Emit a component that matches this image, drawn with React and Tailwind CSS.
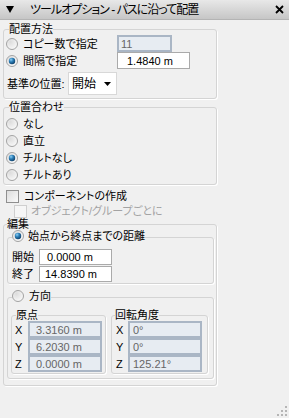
import React from "react";

function Radio({ checked }) {
  return (
    <svg width="12" height="12" viewBox="0 0 12 12" className="shrink-0 block">
      <defs>
        <radialGradient id="rgOuter" cx="0.35" cy="0.3" r="0.8">
          <stop offset="0" stopColor="#dcdcdc" />
          <stop offset="1" stopColor="#fbfbfb" />
        </radialGradient>
        <radialGradient id="rgDot" cx="0.35" cy="0.3" r="0.75">
          <stop offset="0" stopColor="#8fd0f5" />
          <stop offset="0.45" stopColor="#2c7fb8" />
          <stop offset="1" stopColor="#0f3f68" />
        </radialGradient>
      </defs>
      <circle cx="6" cy="6" r="5.5" fill="url(#rgOuter)" stroke="#a2a2a2" />
      {checked && <circle cx="6" cy="6" r="3.2" fill="url(#rgDot)" />}
    </svg>
  );
}

function Check({ disabled }) {
  return (
    <span
      className={
        disabled
          ? "block w-[13px] h-[13px] shrink-0 border border-[#cfcfcf] bg-[#f6f6f6]"
          : "block w-[13px] h-[13px] shrink-0 border border-[#8f8f8f] bg-gradient-to-br from-[#dcdcdc] to-[#fafafa]"
      }
    />
  );
}

function DisInput({ value, w, pl }) {
  return (
    <div
      className={`${w} h-[17px] shrink-0 border-2 border-[#aab6c5] bg-[#e7ecf2] text-[#666666] flex items-center ${pl}`}
    >
      {value}
    </div>
  );
}

const fs = "border border-[#d4d4d4] rounded-[3px] shadow-[1px_1px_0_#ffffff]";

export default function App() {
  return (
    <div className="w-[289px] h-[418px] bg-[#f0f0f0] overflow-hidden flex flex-col text-[11px] leading-[12px] text-black font-['Liberation_Sans','Noto_Sans_CJK_JP',sans-serif] [font-feature-settings:'palt']">
      {/* title bar */}
      <div className="h-[20px] shrink-0 flex items-center bg-gradient-to-b from-[#e8e8e8] to-[#c6c6c6] border-b border-[#b4b4b4]">
        <svg className="ml-[6px] shrink-0" width="8" height="7" viewBox="0 0 8 7">
          <path d="M0 0H8L4 7Z" fill="#000" />
        </svg>
        <span className="ml-[16px] text-[12px] leading-[14px] tracking-[-1px] whitespace-nowrap">
          ツールオプション - パスに沿って配置
        </span>
        <svg className="ml-auto mr-[5px] shrink-0" width="9" height="9" viewBox="0 0 9 9">
          <path d="M1 1L8 8M8 1L1 8" stroke="#000" strokeWidth="1.8" />
        </svg>
      </div>

      {/* 配置方法 */}
      <fieldset className={`mt-[3px] ml-[3px] w-[214px] pb-[3px] pl-[2px] ${fs}`}>
        <legend className="ml-[3px] leading-[12px]">配置方法</legend>
        <div className="flex items-center h-[17px]">
          <div className="w-[111px] flex items-center">
            <Radio />
            <span className="ml-[5px]">コピー数で指定</span>
          </div>
          <DisInput value="11" w="w-[55px]" pl="pl-[2px]" />
        </div>
        <div className="flex items-center h-[17px]">
          <div className="w-[111px] flex items-center">
            <Radio checked />
            <span className="ml-[5px]">間隔で指定</span>
          </div>
          <div className="w-[73px] h-[17px] border border-[#aaaaaa] bg-white flex items-center pl-[9px]">
            1.4840 m
          </div>
        </div>
        <div className="mt-[3px] flex items-center h-[23px]">
          <span className="ml-[1px] w-[61px]">基準の位置:</span>
          <div className="w-[49px] h-[23px] border border-[#d8d8d8] bg-white flex items-center pl-[3px] text-[12px]">
            <span>開始</span>
            <svg className="ml-auto mr-[5px]" width="7" height="4" viewBox="0 0 7 4">
              <path d="M0 0H7L3.5 4Z" fill="#000" />
            </svg>
          </div>
        </div>
      </fieldset>

      {/* 位置合わせ */}
      <fieldset className={`mt-[2px] ml-[3px] w-[214px] pt-[2px] pb-[1px] pl-[2px] ${fs}`}>
        <legend className="ml-[3px] leading-[12px]">位置合わせ</legend>
        {[
          ["なし", false],
          ["直立", false],
          ["チルトなし", true],
          ["チルトあり", false],
        ].map(([t, c]) => (
          <div key={t} className="flex items-center h-[17px]">
            <Radio checked={c} />
            <span className="ml-[5px]">{t}</span>
          </div>
        ))}
      </fieldset>

      {/* checkboxes */}
      <div className="mt-[3px] h-[16px] flex items-center pl-[6px]">
        <Check />
        <span className="ml-[5px]">コンポーネントの作成</span>
      </div>
      <div className="h-[14px] flex items-center pl-[14px]">
        <Check disabled />
        <span className="ml-[4px] text-[#a3a3a3]">オブジェクト/グループごとに</span>
      </div>

      {/* 編集 */}
      <fieldset className={`ml-[3px] w-[214px] pb-[6px] ${fs}`}>
        <legend className="ml-[3px] leading-[12px]">編集</legend>

        <fieldset className={`ml-[3px] mr-[2px] pt-[5px] pb-[1px] ${fs}`}>
          <legend className="ml-[4px] leading-[12px]">
            <span className="inline-flex items-center">
              <Radio checked />
              <span className="ml-[4px]">始点から終点までの距離</span>
            </span>
          </legend>
          <div className="flex items-center h-[16px]">
            <span className="pl-[4px] w-[31px]">開始</span>
            <div className="w-[73px] h-[16px] border border-[#aaaaaa] bg-white flex items-center pl-[7px]">
              0.0000 m
            </div>
          </div>
          <div className="mt-[1px] flex items-center h-[16px]">
            <span className="pl-[4px] w-[31px]">終了</span>
            <div className="w-[73px] h-[16px] border border-[#aaaaaa] bg-white flex items-center pl-[5px]">
              14.8390 m
            </div>
          </div>
        </fieldset>

        <fieldset className={`mt-[6px] ml-[3px] mr-[2px] pb-[4px] ${fs}`}>
          <legend className="ml-[4px] leading-[12px]">
            <span className="inline-flex items-center">
              <Radio />
              <span className="ml-[5px]">方向</span>
            </span>
          </legend>
          <div className="mt-[5px] flex">
            <fieldset className={`ml-[3px] w-[95px] pb-[1px] ${fs}`}>
              <legend className="ml-[4px] leading-[12px]">原点</legend>
              {[
                ["X", "3.3160 m"],
                ["Y", "6.2030 m"],
                ["Z", "0.0000 m"],
              ].map(([l, v]) => (
                <div key={l} className="flex items-center h-[17px]">
                  <span className="pl-[3px] w-[16px]">{l}</span>
                  <DisInput value={v} w="w-[74px]" pl="pl-[6px]" />
                </div>
              ))}
            </fieldset>
            <fieldset className={`ml-[5px] w-[97px] pb-[1px] ${fs}`}>
              <legend className="ml-[3px] leading-[12px]">回転角度</legend>
              {[
                ["X", "0°"],
                ["Y", "0°"],
                ["Z", "125.21°"],
              ].map(([l, v]) => (
                <div key={l} className="flex items-center h-[17px]">
                  <span className="pl-[4px] w-[16px]">{l}</span>
                  <DisInput value={v} w="w-[74px]" pl="pl-[3px]" />
                </div>
              ))}
            </fieldset>
          </div>
        </fieldset>
      </fieldset>

      {/* resize grip */}
      <svg className="mt-auto self-end mr-[2px] mb-[2px]" width="10" height="10" viewBox="0 0 10 10">
        <g fill="#b5b5b5">
          <rect x="8" y="0" width="2" height="2" />
          <rect x="4" y="4" width="2" height="2" />
          <rect x="8" y="4" width="2" height="2" />
          <rect x="0" y="8" width="2" height="2" />
          <rect x="4" y="8" width="2" height="2" />
          <rect x="8" y="8" width="2" height="2" />
        </g>
      </svg>
    </div>
  );
}
